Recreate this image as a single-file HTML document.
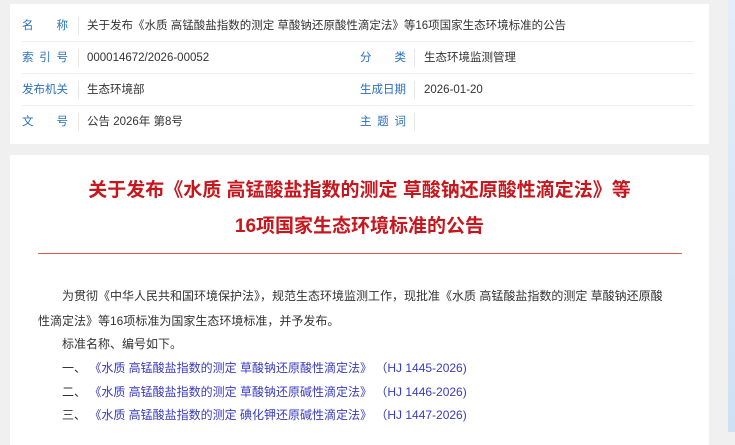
<!DOCTYPE html>
<html><head><meta charset="utf-8"><style>
*{margin:0;padding:0;box-sizing:border-box}
body{width:735px;height:432px;overflow:hidden;background:#f0f0f0;font-family:"Liberation Sans","Noto Sans CJK SC",sans-serif;font-size:12px;color:#333;position:relative}
.strip{position:absolute;left:728px;top:0;width:7px;height:432px;background:linear-gradient(#e4eef8,#cfe0f2)}
.card1{position:absolute;left:10px;top:4px;width:699px;height:140px;background:#fff}
.row{position:absolute;left:12px;width:672px;height:32px;border-bottom:1px solid #eee}
.lab{position:absolute;color:#2a6fbd;font-size:11.5px;top:8px;width:46px;line-height:16px}
.div{position:absolute;width:1px;height:18px;top:7px;background:#e8e8e8}
.val{position:absolute;top:8px;color:#333;font-size:11.5px;white-space:nowrap;line-height:16px}
.card2{position:absolute;left:10px;top:155px;width:699px;height:290px;background:#fff}
h1{position:absolute;left:0;width:699px;text-align:center;color:#c8161d;font-size:19px;font-weight:bold;line-height:36px;top:18px}
.hr{position:absolute;left:28px;width:644px;top:98px;height:1px;background:#e0574d}
.p{position:absolute;left:28px;width:660px;white-space:nowrap;font-size:12px;color:#333;line-height:16px}
.a{color:#3a3ac0}
</style></head><body>
<div class="strip"></div>
<div class="card1">
 <div class="row" style="top:6px"><span class="lab" style="left:0;text-align-last:justify">名 称</span><i class="div" style="left:56px"></i><span class="val" style="left:65px">关于发布《水质 高锰酸盐指数的测定 草酸钠还原酸性滴定法》等16项国家生态环境标准的公告</span></div>
 <div class="row" style="top:38px"><span class="lab" style="left:0;text-align-last:justify">索 引 号</span><i class="div" style="left:56px"></i><span class="val" style="left:65px">000014672/2026-00052</span><span class="lab" style="left:338px;text-align-last:justify">分 类</span><i class="div" style="left:392px"></i><span class="val" style="left:402px">生态环境监测管理</span></div>
 <div class="row" style="top:70px"><span class="lab" style="left:0;text-align-last:justify">发布机关</span><i class="div" style="left:56px"></i><span class="val" style="left:65px">生态环境部</span><span class="lab" style="left:338px;text-align-last:justify">生成日期</span><i class="div" style="left:392px"></i><span class="val" style="left:402px">2026-01-20</span></div>
 <div class="row" style="top:102px;border:none"><span class="lab" style="left:0;text-align-last:justify">文 号</span><i class="div" style="left:56px"></i><span class="val" style="left:65px">公告 2026年 第8号</span><span class="lab" style="left:338px;text-align-last:justify">主 题 词</span><i class="div" style="left:392px"></i></div>
</div>
<div class="card2">
 <h1>关于发布《水质 高锰酸盐指数的测定 草酸钠还原酸性滴定法》等<br>16项国家生态环境标准的公告</h1>
 <div class="hr"></div>
 <div class="p" style="top:133px;left:52px">为贯彻《中华人民共和国环境保护法》，规范生态环境监测工作，现批准《水质 高锰酸盐指数的测定 草酸钠还原酸</div>
 <div class="p" style="top:158px">性滴定法》等16项标准为国家生态环境标准，并予发布。</div>
 <div class="p" style="top:181px;left:52px">标准名称、编号如下。</div>
 <div class="p" style="top:205px;left:52px">一、&nbsp;<span class="a">《水质 高锰酸盐指数的测定 草酸钠还原酸性滴定法》&nbsp;（HJ 1445-2026)</span></div>
 <div class="p" style="top:229px;left:52px">二、&nbsp;<span class="a">《水质 高锰酸盐指数的测定 草酸钠还原碱性滴定法》&nbsp;（HJ 1446-2026)</span></div>
 <div class="p" style="top:252px;left:52px">三、&nbsp;<span class="a">《水质 高锰酸盐指数的测定 碘化钾还原碱性滴定法》&nbsp;（HJ 1447-2026)</span></div>
</div>
</body></html>
